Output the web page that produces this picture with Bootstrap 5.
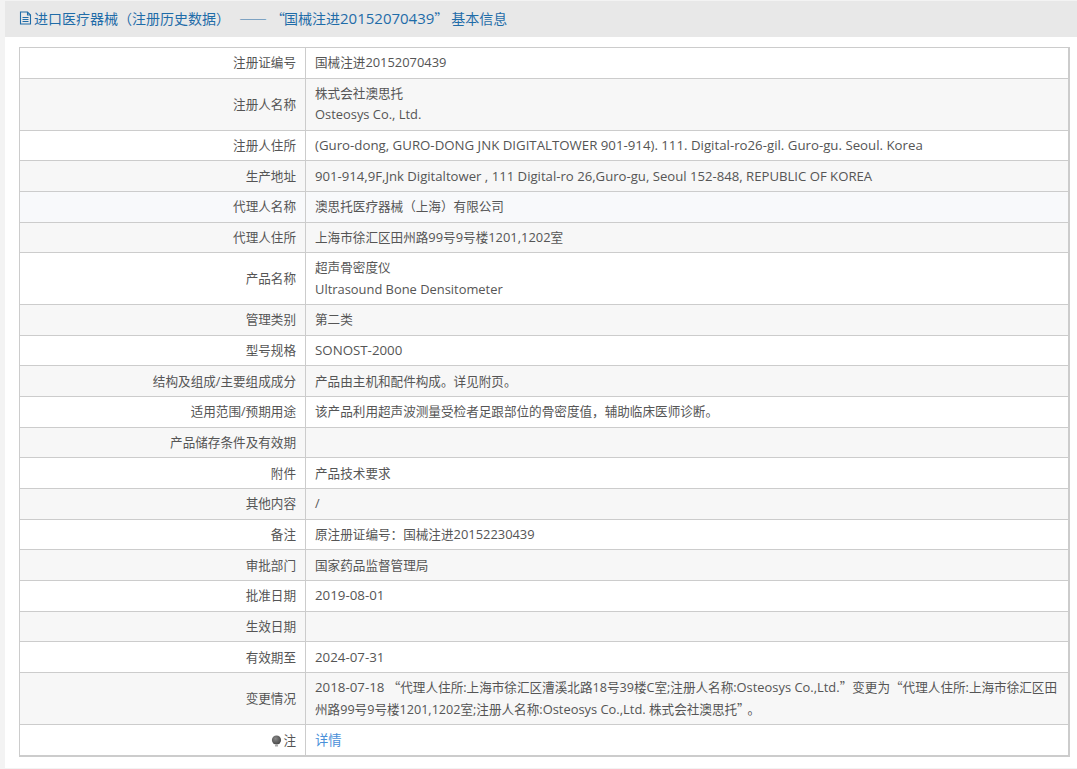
<!DOCTYPE html>
<html lang="zh-CN">
<head>
<meta charset="utf-8">
<link rel="stylesheet" href="https://cdn.jsdelivr.net/npm/bootstrap@5.3.0/dist/css/bootstrap.min.css">
<style>
body{background:#f3f3f3;font-family:"Open Sans","Noto Sans CJK SC",sans-serif;font-size:12.6px;color:#555;margin:0;overflow:hidden;}
.sheet{margin:1px 0 0 5px;background:#fff;padding-bottom:11px;}
.sheet-head{height:36px;background:#e8e8e8;color:#1f6ca8;font-size:14px;padding:0 14px 2px;display:flex;align-items:center;white-space:nowrap;}
.sheet-head svg{margin-right:2px;flex:none;}
.sheet-head .num{font-size:15px;font-family:"Open Sans",sans-serif;line-height:1;}
.cjk{font-family:"Noto Sans CJK SC",sans-serif;line-height:1;}
.dash{margin-left:9px;margin-right:4px;}
.lquote{margin-right:-1px;}
.tail{margin-left:3px;}
.endq{margin-right:4px;}
.info-wrap{padding:10px 7px 0 14px;}
.info{border-collapse:collapse;width:100%;table-layout:fixed;border-style:solid;border-color:#ccc;border-width:1px 2px 2px 1px;}
.info td{border:1px solid #ccc;padding:4.2px 9px 3.8px;line-height:21.45px;vertical-align:middle;color:#555;}
.info tr{height:30.67px;}
.info tr.last{height:32px;}
.info td.lab{width:286px;text-align:right;}
.info tr.alt td{background:#f7f7f7;}
.info tr.tint td{background:#f8f9fb;}
.info a{color:#4a90d9;text-decoration:none;font-size:13.3px;line-height:1;}
.lat,.caps,.caps2,.dg,.dt{line-height:1;}
.lat{font-size:12.9px;}
.caps{font-size:13.25px;}
.caps2{font-size:13.15px;}
.dg{font-size:12.9px;}
.dt{font-size:13.3px;}
.bulb{vertical-align:-2px;margin-right:1px;}
</style>
</head>
<body>
<div class="sheet">
<div class="sheet-head">
<svg width="13" height="14" viewBox="0 0 13 14" fill="none" stroke="#1f6ca8" stroke-width="1.1"><path d="M1.5 1h7l3 3v9h-10z"/><path d="M8.5 1v3h3"/><path d="M3.5 6.5h6M3.5 8.5h6M3.5 10.5h6"/></svg>
<span class="cjk">进口医疗器械（注册历史数据）<span class="dash">——</span><span class="lquote">“</span>国械注进<span class="num">20152070439</span>”<span class="tail">基本信息</span></span>
</div>
<div class="info-wrap">
<table class="info">
<tr><td class="lab">注册证编号</td><td>国械注进<span class="dg">20152070439</span></td></tr>
<tr class="alt"><td class="lab">注册人名称</td><td>株式会社澳思托<br><span class="lat">Osteosys Co., Ltd.</span></td></tr>
<tr><td class="lab">注册人住所</td><td><span class="caps">(Guro-dong, GURO-DONG JNK DIGITALTOWER 901-914). 111. Digital-ro26-gil. Guro-gu. Seoul. Korea</span></td></tr>
<tr class="alt"><td class="lab">生产地址</td><td><span class="caps2">901-914,9F,Jnk Digitaltower , 111 Digital-ro 26,Guro-gu, Seoul 152-848, REPUBLIC OF KOREA</span></td></tr>
<tr class="tint"><td class="lab">代理人名称</td><td>澳思托医疗器械（上海）有限公司</td></tr>
<tr class="alt"><td class="lab">代理人住所</td><td>上海市徐汇区田州路<span class="dg">99</span>号<span class="dg">9</span>号楼<span class="dg">1201,1202</span>室</td></tr>
<tr><td class="lab">产品名称</td><td>超声骨密度仪<br><span class="lat">Ultrasound Bone Densitometer</span></td></tr>
<tr class="alt"><td class="lab">管理类别</td><td>第二类</td></tr>
<tr><td class="lab">型号规格</td><td><span class="dt">SONOST-2000</span></td></tr>
<tr class="alt"><td class="lab">结构及组成/主要组成成分</td><td>产品由主机和配件构成。详见附页。</td></tr>
<tr><td class="lab">适用范围/预期用途</td><td>该产品利用超声波测量受检者足跟部位的骨密度值，辅助临床医师诊断。</td></tr>
<tr class="alt"><td class="lab">产品储存条件及有效期</td><td></td></tr>
<tr><td class="lab">附件</td><td>产品技术要求</td></tr>
<tr class="alt"><td class="lab">其他内容</td><td>/</td></tr>
<tr><td class="lab">备注</td><td>原注册证编号：国械注进<span class="dg">20152230439</span></td></tr>
<tr class="alt"><td class="lab">审批部门</td><td>国家药品监督管理局</td></tr>
<tr><td class="lab">批准日期</td><td><span class="dt">2019-08-01</span></td></tr>
<tr class="alt"><td class="lab">生效日期</td><td></td></tr>
<tr><td class="lab">有效期至</td><td><span class="dt">2024-07-31</span></td></tr>
<tr class="alt"><td class="lab">变更情况</td><td><span class="dt">2018-07-18</span> <span class="cjk">“</span>代理人住所:上海市徐汇区漕溪北路18号39楼C室;注册人名称:<span class="lat">Osteosys Co.,Ltd.</span><span class="cjk">”</span>变更为<span class="cjk">“</span>代理人住所:上海市徐汇区田州路99号9号楼1201,1202室;注册人名称:<span class="lat">Osteosys Co.,Ltd.</span> 株式会社澳思托<span class="cjk endq">”</span>。</td></tr>
<tr class="last"><td class="lab"><svg class="bulb" width="11" height="12" viewBox="0 0 11 12"><defs><radialGradient id="g" cx="0.4" cy="0.35" r="0.7"><stop offset="0" stop-color="#888"/><stop offset="1" stop-color="#444"/></radialGradient></defs><circle cx="5.5" cy="5" r="4.6" fill="url(#g)"/><rect x="4" y="10" width="3" height="1.5" fill="#aaa"/></svg>注</td><td><a href="#">详情</a></td></tr>
</table>
</div>
</div>
<script src="https://cdn.jsdelivr.net/npm/bootstrap@5.3.0/dist/js/bootstrap.bundle.min.js"></script>
</body>
</html>
